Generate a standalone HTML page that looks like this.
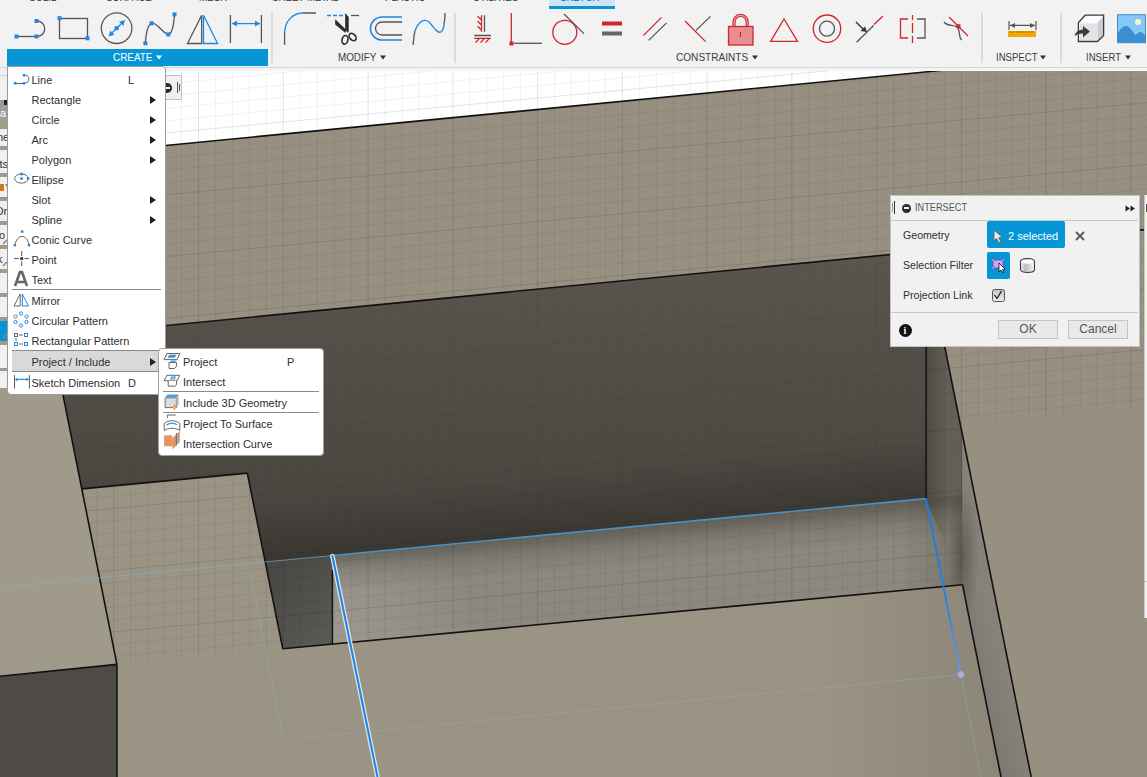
<!DOCTYPE html>
<html><head><meta charset="utf-8">
<style>
html,body{margin:0;padding:0;width:1147px;height:777px;overflow:hidden;background:#fff;font-family:"Liberation Sans",sans-serif;}
.abs{position:absolute;}
#tb{position:absolute;left:0;top:0;width:1147px;height:67px;background:#f2f2f2;border-bottom:1px solid #d6d6d6;}
.tab{position:absolute;top:-9px;font-size:11px;color:#333;white-space:nowrap;transform:scaleX(0.88);transform-origin:0 0;}
.glab{position:absolute;top:50.5px;font-size:11px;color:#3c3c3c;white-space:nowrap;transform-origin:0 0;}
.tri{display:inline-block;width:0;height:0;border-left:3px solid transparent;border-right:3px solid transparent;border-top:4px solid #333;vertical-align:middle;margin-left:3px;position:relative;top:-1px;}
.sep{position:absolute;top:13px;width:2px;height:50px;background:#dadada;}
#menu{position:absolute;left:7px;top:66px;width:157px;height:327px;background:#fff;border:1px solid #9a9a9a;border-radius:0 4px 4px 4px;box-sizing:content-box;}
.mi{position:absolute;left:23.5px;font-size:11px;color:#2e2e2e;white-space:nowrap;}
.sc{position:absolute;font-size:11px;color:#2e2e2e;}
.arr{position:absolute;left:142px;width:0;height:0;border-top:4.5px solid transparent;border-bottom:4.5px solid transparent;border-left:6px solid #222;}
.msep{position:absolute;left:4px;width:149px;height:1px;background:#8a8a8a;}
#sub{position:absolute;left:158px;top:348px;width:164px;height:106px;background:#fff;border:1px solid #a0a0a0;border-radius:4px;}
.si{position:absolute;left:24px;font-size:11px;color:#2e2e2e;white-space:nowrap;}
#dlg{position:absolute;left:890px;top:195px;width:250px;height:152px;background:#f1f1f1;border:1px solid #c4c4c4;box-sizing:border-box;}
.dl{position:absolute;left:12px;font-size:10.6px;color:#2e2e2e;white-space:nowrap;}
.btn{position:absolute;top:124px;width:58px;height:17px;background:#e9e9e9;border:1px solid #c4c4c4;font-size:12px;color:#555;text-align:center;line-height:17px;}
</style></head><body>
<svg class="abs" style="left:0;top:0" width="1147" height="777" viewBox="0 0 1147 777"><rect x="0" y="0" width="1147" height="777" fill="#ffffff"/><defs>
<linearGradient id="gD" x1="0" y1="0" x2="0" y2="1"><stop offset="0" stop-color="#5a564e"/><stop offset="1" stop-color="#423f3a"/></linearGradient>
<linearGradient id="gM" x1="0" y1="0" x2="0" y2="1"><stop offset="0" stop-color="#6e6b64"/><stop offset="0.35" stop-color="#858279"/><stop offset="1" stop-color="#8d8a80"/></linearGradient>
<linearGradient id="gN" x1="0" y1="0" x2="1" y2="1"><stop offset="0" stop-color="#42423f"/><stop offset="1" stop-color="#5c5b57"/></linearGradient>
<linearGradient id="aoD" gradientUnits="userSpaceOnUse" x1="630" y1="527" x2="624" y2="467"><stop offset="0" stop-color="#1e1c19" stop-opacity="0.32"/><stop offset="1" stop-color="#1e1c19" stop-opacity="0"/></linearGradient>
<linearGradient id="gS" x1="0" y1="0" x2="1" y2="0"><stop offset="0" stop-color="#6a6760"/><stop offset="0.6" stop-color="#8a867e"/><stop offset="1" stop-color="#8c887f"/></linearGradient>
</defs><polygon points="0.0,161.5 1147.0,50.5 1147.0,777.0 0.0,777.0" fill="#978f80"/><polygon points="51.4,336.7 926.0,251.0 926.0,498.6 332.4,555.5 332.4,644.7 282.8,648.8 247.3,473.1 81.8,488.9" fill="url(#gD)"/><polygon points="247.3,473.1 926.0,410.0 926.0,498.6 332.4,555.5 265.6,562.0" fill="url(#aoD)"/><polygon points="249.4,563.7 332.4,555.5 332.4,644.7 282.8,648.8" fill="url(#gN)"/><polygon points="332.4,644.1 332.4,555.5 926.0,498.6 926.0,251.0 925.5,251.0 962.5,435.2 962.5,584.7" fill="#8b887e"/><defs>
<linearGradient id="aoTop" gradientUnits="userSpaceOnUse" x1="630" y1="527" x2="633.5" y2="567"><stop offset="0" stop-color="#3a3630" stop-opacity="0.5"/><stop offset="0.5" stop-color="#3a3630" stop-opacity="0.15"/><stop offset="1" stop-color="#3a3630" stop-opacity="0"/></linearGradient>
<linearGradient id="aoL" gradientUnits="userSpaceOnUse" x1="333" y1="640" x2="450" y2="560"><stop offset="0" stop-color="#ffffff" stop-opacity="0.14"/><stop offset="1" stop-color="#ffffff" stop-opacity="0"/></linearGradient>
<linearGradient id="aoR" gradientUnits="userSpaceOnUse" x1="926" y1="0" x2="948" y2="0"><stop offset="0" stop-color="#3a3630" stop-opacity="0.5"/><stop offset="1" stop-color="#3a3630" stop-opacity="0"/></linearGradient>
<linearGradient id="aoR2" gradientUnits="userSpaceOnUse" x1="962" y1="0" x2="900" y2="0"><stop offset="0" stop-color="#3a3630" stop-opacity="0.25"/><stop offset="1" stop-color="#3a3630" stop-opacity="0"/></linearGradient>
</defs><polygon points="332.4,644.1 332.4,555.5 926.0,498.6 926.0,251.0 925.5,251.0 962.5,435.2 962.5,584.7" fill="url(#aoL)"/><polygon points="332.4,644.1 332.4,555.5 926.0,498.6 926.0,251.0 925.5,251.0 962.5,435.2 962.5,584.7" fill="url(#aoTop)"/><polygon points="926.0,251.0 925.5,251.0 962.5,435.2 962.5,584.7 926.0,498.6" fill="url(#aoR)"/><polygon points="900.0,500.0 962.5,495.0 962.5,584.7 900.0,590.6" fill="url(#aoR2)"/><polygon points="81.8,488.9 247.3,473.1 282.8,648.8 962.5,584.7 1001.0,777.0 116.9,777.0 116.9,664.4" fill="#9b9485"/><g><line x1="12.00" y1="68" x2="12.00" y2="777" stroke="#000" stroke-opacity="0.055" stroke-width="1"/><line x1="28.95" y1="68" x2="28.95" y2="777" stroke="#000" stroke-opacity="0.11" stroke-width="1"/><line x1="45.91" y1="68" x2="45.91" y2="777" stroke="#000" stroke-opacity="0.055" stroke-width="1"/><line x1="62.86" y1="68" x2="62.86" y2="777" stroke="#000" stroke-opacity="0.055" stroke-width="1"/><line x1="79.82" y1="68" x2="79.82" y2="777" stroke="#000" stroke-opacity="0.055" stroke-width="1"/><line x1="96.77" y1="68" x2="96.77" y2="777" stroke="#000" stroke-opacity="0.055" stroke-width="1"/><line x1="113.73" y1="68" x2="113.73" y2="777" stroke="#000" stroke-opacity="0.11" stroke-width="1"/><line x1="130.68" y1="68" x2="130.68" y2="777" stroke="#000" stroke-opacity="0.055" stroke-width="1"/><line x1="147.63" y1="68" x2="147.63" y2="777" stroke="#000" stroke-opacity="0.055" stroke-width="1"/><line x1="164.59" y1="68" x2="164.59" y2="777" stroke="#000" stroke-opacity="0.055" stroke-width="1"/><line x1="181.55" y1="68" x2="181.55" y2="777" stroke="#000" stroke-opacity="0.055" stroke-width="1"/><line x1="198.50" y1="68" x2="198.50" y2="777" stroke="#000" stroke-opacity="0.11" stroke-width="1"/><line x1="215.45" y1="68" x2="215.45" y2="777" stroke="#000" stroke-opacity="0.055" stroke-width="1"/><line x1="232.41" y1="68" x2="232.41" y2="777" stroke="#000" stroke-opacity="0.055" stroke-width="1"/><line x1="249.37" y1="68" x2="249.37" y2="777" stroke="#000" stroke-opacity="0.055" stroke-width="1"/><line x1="266.32" y1="68" x2="266.32" y2="777" stroke="#000" stroke-opacity="0.055" stroke-width="1"/><line x1="283.27" y1="68" x2="283.27" y2="777" stroke="#000" stroke-opacity="0.11" stroke-width="1"/><line x1="300.23" y1="68" x2="300.23" y2="777" stroke="#000" stroke-opacity="0.055" stroke-width="1"/><line x1="317.19" y1="68" x2="317.19" y2="777" stroke="#000" stroke-opacity="0.055" stroke-width="1"/><line x1="334.14" y1="68" x2="334.14" y2="777" stroke="#000" stroke-opacity="0.055" stroke-width="1"/><line x1="351.09" y1="68" x2="351.09" y2="777" stroke="#000" stroke-opacity="0.055" stroke-width="1"/><line x1="368.05" y1="68" x2="368.05" y2="777" stroke="#000" stroke-opacity="0.11" stroke-width="1"/><line x1="385.00" y1="68" x2="385.00" y2="777" stroke="#000" stroke-opacity="0.055" stroke-width="1"/><line x1="401.96" y1="68" x2="401.96" y2="777" stroke="#000" stroke-opacity="0.055" stroke-width="1"/><line x1="418.91" y1="68" x2="418.91" y2="777" stroke="#000" stroke-opacity="0.055" stroke-width="1"/><line x1="435.87" y1="68" x2="435.87" y2="777" stroke="#000" stroke-opacity="0.055" stroke-width="1"/><line x1="452.82" y1="68" x2="452.82" y2="777" stroke="#000" stroke-opacity="0.11" stroke-width="1"/><line x1="469.78" y1="68" x2="469.78" y2="777" stroke="#000" stroke-opacity="0.055" stroke-width="1"/><line x1="486.73" y1="68" x2="486.73" y2="777" stroke="#000" stroke-opacity="0.055" stroke-width="1"/><line x1="503.69" y1="68" x2="503.69" y2="777" stroke="#000" stroke-opacity="0.055" stroke-width="1"/><line x1="520.64" y1="68" x2="520.64" y2="777" stroke="#000" stroke-opacity="0.055" stroke-width="1"/><line x1="537.60" y1="68" x2="537.60" y2="777" stroke="#000" stroke-opacity="0.11" stroke-width="1"/><line x1="554.55" y1="68" x2="554.55" y2="777" stroke="#000" stroke-opacity="0.055" stroke-width="1"/><line x1="571.51" y1="68" x2="571.51" y2="777" stroke="#000" stroke-opacity="0.055" stroke-width="1"/><line x1="588.46" y1="68" x2="588.46" y2="777" stroke="#000" stroke-opacity="0.055" stroke-width="1"/><line x1="605.42" y1="68" x2="605.42" y2="777" stroke="#000" stroke-opacity="0.055" stroke-width="1"/><line x1="622.38" y1="68" x2="622.38" y2="777" stroke="#000" stroke-opacity="0.11" stroke-width="1"/><line x1="639.33" y1="68" x2="639.33" y2="777" stroke="#000" stroke-opacity="0.055" stroke-width="1"/><line x1="656.28" y1="68" x2="656.28" y2="777" stroke="#000" stroke-opacity="0.055" stroke-width="1"/><line x1="673.24" y1="68" x2="673.24" y2="777" stroke="#000" stroke-opacity="0.055" stroke-width="1"/><line x1="690.19" y1="68" x2="690.19" y2="777" stroke="#000" stroke-opacity="0.055" stroke-width="1"/><line x1="707.15" y1="68" x2="707.15" y2="777" stroke="#000" stroke-opacity="0.11" stroke-width="1"/><line x1="724.10" y1="68" x2="724.10" y2="777" stroke="#000" stroke-opacity="0.055" stroke-width="1"/><line x1="741.06" y1="68" x2="741.06" y2="777" stroke="#000" stroke-opacity="0.055" stroke-width="1"/><line x1="758.01" y1="68" x2="758.01" y2="777" stroke="#000" stroke-opacity="0.055" stroke-width="1"/><line x1="774.97" y1="68" x2="774.97" y2="777" stroke="#000" stroke-opacity="0.055" stroke-width="1"/><line x1="791.92" y1="68" x2="791.92" y2="777" stroke="#000" stroke-opacity="0.11" stroke-width="1"/><line x1="808.88" y1="68" x2="808.88" y2="777" stroke="#000" stroke-opacity="0.055" stroke-width="1"/><line x1="825.83" y1="68" x2="825.83" y2="777" stroke="#000" stroke-opacity="0.055" stroke-width="1"/><line x1="842.79" y1="68" x2="842.79" y2="777" stroke="#000" stroke-opacity="0.055" stroke-width="1"/><line x1="859.74" y1="68" x2="859.74" y2="777" stroke="#000" stroke-opacity="0.055" stroke-width="1"/><line x1="876.70" y1="68" x2="876.70" y2="777" stroke="#000" stroke-opacity="0.11" stroke-width="1"/><line x1="893.65" y1="68" x2="893.65" y2="777" stroke="#000" stroke-opacity="0.055" stroke-width="1"/><line x1="910.61" y1="68" x2="910.61" y2="777" stroke="#000" stroke-opacity="0.055" stroke-width="1"/><line x1="927.56" y1="68" x2="927.56" y2="777" stroke="#000" stroke-opacity="0.055" stroke-width="1"/><line x1="944.52" y1="68" x2="944.52" y2="777" stroke="#000" stroke-opacity="0.055" stroke-width="1"/><line x1="961.47" y1="68" x2="961.47" y2="777" stroke="#000" stroke-opacity="0.11" stroke-width="1"/><line x1="978.43" y1="68" x2="978.43" y2="777" stroke="#000" stroke-opacity="0.055" stroke-width="1"/><line x1="995.38" y1="68" x2="995.38" y2="777" stroke="#000" stroke-opacity="0.055" stroke-width="1"/><line x1="1012.34" y1="68" x2="1012.34" y2="777" stroke="#000" stroke-opacity="0.055" stroke-width="1"/><line x1="1029.30" y1="68" x2="1029.30" y2="777" stroke="#000" stroke-opacity="0.055" stroke-width="1"/><line x1="1046.25" y1="68" x2="1046.25" y2="777" stroke="#000" stroke-opacity="0.11" stroke-width="1"/><line x1="1063.20" y1="68" x2="1063.20" y2="777" stroke="#000" stroke-opacity="0.055" stroke-width="1"/><line x1="1080.16" y1="68" x2="1080.16" y2="777" stroke="#000" stroke-opacity="0.055" stroke-width="1"/><line x1="1097.11" y1="68" x2="1097.11" y2="777" stroke="#000" stroke-opacity="0.055" stroke-width="1"/><line x1="1114.07" y1="68" x2="1114.07" y2="777" stroke="#000" stroke-opacity="0.055" stroke-width="1"/><line x1="1131.02" y1="68" x2="1131.02" y2="777" stroke="#000" stroke-opacity="0.11" stroke-width="1"/><line x1="1147.98" y1="68" x2="1147.98" y2="777" stroke="#000" stroke-opacity="0.055" stroke-width="1"/><line x1="0" y1="62.20" x2="1147" y2="-45.62" stroke="#000" stroke-opacity="0.055" stroke-width="1"/><line x1="0" y1="74.55" x2="1147" y2="-33.27" stroke="#000" stroke-opacity="0.055" stroke-width="1"/><line x1="0" y1="86.90" x2="1147" y2="-20.92" stroke="#000" stroke-opacity="0.11" stroke-width="1"/><line x1="0" y1="99.25" x2="1147" y2="-8.57" stroke="#000" stroke-opacity="0.055" stroke-width="1"/><line x1="0" y1="111.60" x2="1147" y2="3.78" stroke="#000" stroke-opacity="0.055" stroke-width="1"/><line x1="0" y1="123.95" x2="1147" y2="16.13" stroke="#000" stroke-opacity="0.055" stroke-width="1"/><line x1="0" y1="136.30" x2="1147" y2="28.48" stroke="#000" stroke-opacity="0.055" stroke-width="1"/><line x1="0" y1="148.65" x2="1147" y2="40.83" stroke="#000" stroke-opacity="0.11" stroke-width="1"/><line x1="0" y1="161.00" x2="1147" y2="53.18" stroke="#000" stroke-opacity="0.055" stroke-width="1"/><line x1="0" y1="173.35" x2="1147" y2="65.53" stroke="#000" stroke-opacity="0.055" stroke-width="1"/><line x1="0" y1="185.70" x2="1147" y2="77.88" stroke="#000" stroke-opacity="0.055" stroke-width="1"/><line x1="0" y1="198.05" x2="1147" y2="90.23" stroke="#000" stroke-opacity="0.055" stroke-width="1"/><line x1="0" y1="210.40" x2="1147" y2="102.58" stroke="#000" stroke-opacity="0.11" stroke-width="1"/><line x1="0" y1="222.75" x2="1147" y2="114.93" stroke="#000" stroke-opacity="0.055" stroke-width="1"/><line x1="0" y1="235.10" x2="1147" y2="127.28" stroke="#000" stroke-opacity="0.055" stroke-width="1"/><line x1="0" y1="247.45" x2="1147" y2="139.63" stroke="#000" stroke-opacity="0.055" stroke-width="1"/><line x1="0" y1="259.80" x2="1147" y2="151.98" stroke="#000" stroke-opacity="0.055" stroke-width="1"/><line x1="0" y1="272.15" x2="1147" y2="164.33" stroke="#000" stroke-opacity="0.11" stroke-width="1"/><line x1="0" y1="284.50" x2="1147" y2="176.68" stroke="#000" stroke-opacity="0.055" stroke-width="1"/><line x1="0" y1="296.85" x2="1147" y2="189.03" stroke="#000" stroke-opacity="0.055" stroke-width="1"/><line x1="0" y1="309.20" x2="1147" y2="201.38" stroke="#000" stroke-opacity="0.055" stroke-width="1"/><line x1="0" y1="321.55" x2="1147" y2="213.73" stroke="#000" stroke-opacity="0.055" stroke-width="1"/><line x1="0" y1="333.90" x2="1147" y2="226.08" stroke="#000" stroke-opacity="0.11" stroke-width="1"/><line x1="0" y1="346.25" x2="1147" y2="238.43" stroke="#000" stroke-opacity="0.055" stroke-width="1"/><line x1="0" y1="358.60" x2="1147" y2="250.78" stroke="#000" stroke-opacity="0.055" stroke-width="1"/><line x1="0" y1="370.95" x2="1147" y2="263.13" stroke="#000" stroke-opacity="0.055" stroke-width="1"/><line x1="0" y1="383.30" x2="1147" y2="275.48" stroke="#000" stroke-opacity="0.055" stroke-width="1"/><line x1="0" y1="395.65" x2="1147" y2="287.83" stroke="#000" stroke-opacity="0.11" stroke-width="1"/><line x1="0" y1="408.00" x2="1147" y2="300.18" stroke="#000" stroke-opacity="0.055" stroke-width="1"/><line x1="0" y1="420.35" x2="1147" y2="312.53" stroke="#000" stroke-opacity="0.055" stroke-width="1"/><line x1="0" y1="432.70" x2="1147" y2="324.88" stroke="#000" stroke-opacity="0.055" stroke-width="1"/><line x1="0" y1="445.05" x2="1147" y2="337.23" stroke="#000" stroke-opacity="0.055" stroke-width="1"/><line x1="0" y1="457.40" x2="1147" y2="349.58" stroke="#000" stroke-opacity="0.11" stroke-width="1"/><line x1="0" y1="469.75" x2="1147" y2="361.93" stroke="#000" stroke-opacity="0.055" stroke-width="1"/><line x1="0" y1="482.10" x2="1147" y2="374.28" stroke="#000" stroke-opacity="0.055" stroke-width="1"/><line x1="0" y1="494.45" x2="1147" y2="386.63" stroke="#000" stroke-opacity="0.055" stroke-width="1"/><line x1="0" y1="506.80" x2="1147" y2="398.98" stroke="#000" stroke-opacity="0.055" stroke-width="1"/><line x1="0" y1="519.15" x2="1147" y2="411.33" stroke="#000" stroke-opacity="0.11" stroke-width="1"/><line x1="0" y1="531.50" x2="1147" y2="423.68" stroke="#000" stroke-opacity="0.055" stroke-width="1"/><line x1="0" y1="543.85" x2="1147" y2="436.03" stroke="#000" stroke-opacity="0.055" stroke-width="1"/><line x1="0" y1="556.20" x2="1147" y2="448.38" stroke="#000" stroke-opacity="0.055" stroke-width="1"/><line x1="0" y1="568.55" x2="1147" y2="460.73" stroke="#000" stroke-opacity="0.055" stroke-width="1"/><line x1="0" y1="580.90" x2="1147" y2="473.08" stroke="#000" stroke-opacity="0.11" stroke-width="1"/><line x1="0" y1="593.25" x2="1147" y2="485.43" stroke="#000" stroke-opacity="0.055" stroke-width="1"/><line x1="0" y1="605.60" x2="1147" y2="497.78" stroke="#000" stroke-opacity="0.055" stroke-width="1"/><line x1="0" y1="617.95" x2="1147" y2="510.13" stroke="#000" stroke-opacity="0.055" stroke-width="1"/><line x1="0" y1="630.30" x2="1147" y2="522.48" stroke="#000" stroke-opacity="0.055" stroke-width="1"/><line x1="0" y1="642.65" x2="1147" y2="534.83" stroke="#000" stroke-opacity="0.11" stroke-width="1"/><line x1="0" y1="655.00" x2="1147" y2="547.18" stroke="#000" stroke-opacity="0.055" stroke-width="1"/><line x1="0" y1="667.35" x2="1147" y2="559.53" stroke="#000" stroke-opacity="0.055" stroke-width="1"/><line x1="0" y1="679.70" x2="1147" y2="571.88" stroke="#000" stroke-opacity="0.055" stroke-width="1"/><line x1="0" y1="692.05" x2="1147" y2="584.23" stroke="#000" stroke-opacity="0.055" stroke-width="1"/><line x1="0" y1="704.40" x2="1147" y2="596.58" stroke="#000" stroke-opacity="0.11" stroke-width="1"/><line x1="0" y1="716.75" x2="1147" y2="608.93" stroke="#000" stroke-opacity="0.055" stroke-width="1"/><line x1="0" y1="729.10" x2="1147" y2="621.28" stroke="#000" stroke-opacity="0.055" stroke-width="1"/><line x1="0" y1="741.45" x2="1147" y2="633.63" stroke="#000" stroke-opacity="0.055" stroke-width="1"/><line x1="0" y1="753.80" x2="1147" y2="645.98" stroke="#000" stroke-opacity="0.055" stroke-width="1"/><line x1="0" y1="766.15" x2="1147" y2="658.33" stroke="#000" stroke-opacity="0.11" stroke-width="1"/><line x1="0" y1="778.50" x2="1147" y2="670.68" stroke="#000" stroke-opacity="0.055" stroke-width="1"/><line x1="0" y1="790.85" x2="1147" y2="683.03" stroke="#000" stroke-opacity="0.055" stroke-width="1"/><line x1="0" y1="803.20" x2="1147" y2="695.38" stroke="#000" stroke-opacity="0.055" stroke-width="1"/><line x1="0" y1="815.55" x2="1147" y2="707.73" stroke="#000" stroke-opacity="0.055" stroke-width="1"/><line x1="0" y1="827.90" x2="1147" y2="720.08" stroke="#000" stroke-opacity="0.11" stroke-width="1"/><line x1="0" y1="840.25" x2="1147" y2="732.43" stroke="#000" stroke-opacity="0.055" stroke-width="1"/><line x1="0" y1="852.60" x2="1147" y2="744.78" stroke="#000" stroke-opacity="0.055" stroke-width="1"/><line x1="0" y1="864.95" x2="1147" y2="757.13" stroke="#000" stroke-opacity="0.055" stroke-width="1"/><line x1="0" y1="877.30" x2="1147" y2="769.48" stroke="#000" stroke-opacity="0.055" stroke-width="1"/><line x1="0" y1="889.65" x2="1147" y2="781.83" stroke="#000" stroke-opacity="0.11" stroke-width="1"/></g><polygon points="51.4,336.7 926.0,251.0 926.0,498.6 332.4,555.5 265.6,562.0 247.3,473.1 81.8,488.9" fill="url(#gD)" fill-opacity="0.4"/><polygon points="247.3,473.1 926.0,410.0 926.0,498.6 332.4,555.5 265.6,562.0" fill="url(#aoD)" fill-opacity="0.4"/><polygon points="0.0,341.8 51.4,336.7 116.9,664.4 0.0,676.3" fill="#a09a8b"/><polygon points="0.0,676.3 116.9,664.4 116.9,777.0 0.0,777.0" fill="#4e4b46"/><polygon points="116.9,664.4 962.5,584.7 1001.0,777.0 116.9,777.0" fill="#9b9485"/><defs><linearGradient id="aoFB" gradientUnits="userSpaceOnUse" x1="985" y1="0" x2="820" y2="0"><stop offset="0" stop-color="#2e2b27" stop-opacity="0.13"/><stop offset="1" stop-color="#2e2b27" stop-opacity="0"/></linearGradient></defs><polygon points="700.0,609.5 962.5,584.7 1001.0,777.0 700.0,777.0" fill="url(#aoFB)"/><polygon points="962.5,435.2 1031.2,777.0 1001.0,777.0 962.5,584.7" fill="#86827a"/><defs><clipPath id="cW"><polygon points="926.0,251.0 1031.2,777.0 1001.0,777.0 962.5,584.7 900.0,590.6 900.0,500.9 926.0,498.6"/></clipPath>
<radialGradient id="shW"><stop offset="0" stop-color="#2e2b27" stop-opacity="0.42"/><stop offset="0.6" stop-color="#2e2b27" stop-opacity="0.15"/><stop offset="1" stop-color="#2e2b27" stop-opacity="0"/></radialGradient>
<linearGradient id="wallLow" x1="0" y1="0" x2="0" y2="1"><stop offset="0" stop-color="#2e2b27" stop-opacity="0.12"/><stop offset="1" stop-color="#2e2b27" stop-opacity="0"/></linearGradient></defs><g clip-path="url(#cW)"><ellipse cx="963" cy="555" rx="16" ry="75" fill="url(#shW)"/></g><defs><linearGradient id="aoWL" gradientUnits="userSpaceOnUse" x1="975" y1="700" x2="1010" y2="690"><stop offset="0" stop-color="#2e2b27" stop-opacity="0.12"/><stop offset="1" stop-color="#2e2b27" stop-opacity="0"/></linearGradient></defs><polygon points="962.5,584.7 992.6,584.7 1031.2,777.0 1001.0,777.0" fill="url(#aoWL)"/><polygon points="960.3,424.5 1147.0,408.6 1147.0,777.0 1031.2,777.0" fill="#978f80"/><line x1="0.0" y1="161.5" x2="1147.0" y2="50.5" stroke="#111" stroke-width="1.6" /><line x1="0.0" y1="341.8" x2="1147.0" y2="229.4" stroke="#111" stroke-width="1.6" /><line x1="51.4" y1="336.9" x2="116.9" y2="664.4" stroke="#111" stroke-width="1.6" /><line x1="0.0" y1="676.3" x2="116.9" y2="664.4" stroke="#111" stroke-width="1.6" /><line x1="116.9" y1="664.4" x2="116.9" y2="777.0" stroke="#111" stroke-width="1.6" /><line x1="81.8" y1="488.9" x2="247.3" y2="473.1" stroke="#111" stroke-width="1.6" /><line x1="247.3" y1="473.1" x2="282.8" y2="648.8" stroke="#111" stroke-width="1.6" /><line x1="282.8" y1="648.8" x2="962.5" y2="584.7" stroke="#111" stroke-width="1.6" /><line x1="332.4" y1="570.0" x2="332.4" y2="644.7" stroke="#111" stroke-width="1.4" /><line x1="926.0" y1="251.0" x2="926.0" y2="498.6" stroke="#111" stroke-width="1.4" /><line x1="962.5" y1="584.7" x2="1001.0" y2="777.0" stroke="#111" stroke-width="1.6" /><line x1="925.5" y1="251.0" x2="1031.2" y2="777.0" stroke="#111" stroke-width="1.6" /><line x1="0.0" y1="587.3" x2="332.4" y2="555.5" stroke="#7fb0cc" stroke-width="1" stroke-opacity="0.65"/><line x1="248.2" y1="563.8" x2="283.5" y2="739.7" stroke="#7fb0cc" stroke-width="1" stroke-opacity="0.55"/><line x1="283.5" y1="739.7" x2="961.0" y2="674.6" stroke="#7fb0cc" stroke-width="1" stroke-opacity="0.5"/><line x1="961.0" y1="674.6" x2="981.0" y2="777.0" stroke="#7fb0cc" stroke-width="1" stroke-opacity="0.5"/><line x1="332.4" y1="555.5" x2="926.0" y2="498.6" stroke="#4b90c2" stroke-width="1.6" /><line x1="332.4" y1="556.0" x2="377.5" y2="777.0" stroke="#e4e2dc" stroke-width="4.6" stroke-linecap="round"/><line x1="332.4" y1="556.0" x2="377.5" y2="777.0" stroke="#1a84f2" stroke-width="2.0" stroke-linecap="round"/><defs><linearGradient id="gB" gradientUnits="userSpaceOnUse" x1="926" y1="498" x2="961" y2="675"><stop offset="0" stop-color="#1a78ea"/><stop offset="0.55" stop-color="#1f80ea"/><stop offset="1" stop-color="#5a9ce0"/></linearGradient></defs><line x1="926.0" y1="498.6" x2="961.0" y2="674.6" stroke="url(#gB)" stroke-width="1.8" /><circle cx="961" cy="674.6" r="3.3" fill="#aeb0e0" fill-opacity="0.9"/></svg>

<!-- toolbar -->
<div class="abs" style="left:0;top:67px;width:1147px;height:3.5px;background:#f4f4f4"></div>
<div id="tb">
  <div class="tab" style="left:29px">SOLID</div>
  <div class="tab" style="left:106px">SURFACE</div>
  <div class="tab" style="left:199px">MESH</div>
  <div class="tab" style="left:272px">SHEET METAL</div>
  <div class="tab" style="left:385px">PLASTIC</div>
  <div class="tab" style="left:473px">UTILITIES</div>
  <div class="abs" style="left:549px;top:0;width:66px;height:6px;background:#cfe5f5"></div>
  <div class="abs" style="left:549px;top:6px;width:66px;height:3px;background:#0696d7"></div>
  <div class="tab" style="left:560px;color:#0b6aa8">SKETCH</div>

  <div class="abs" style="left:7px;top:49px;width:261px;height:17px;background:#0696d7"></div>
  <div class="glab" style="left:112.7px;color:#fff;transform:scaleX(0.9)">CREATE</div>
  <svg class="abs" style="left:155.6px;top:55px" width="7" height="5"><path d="M0 0.5 H6 L3 4.5 Z" fill="#fff"/></svg>
  <div class="glab" style="left:338.1px;color:#3c3c3c;transform:scaleX(0.895)">MODIFY</div>
  <svg class="abs" style="left:380.0px;top:55px" width="7" height="5"><path d="M0 0.5 H6 L3 4.5 Z" fill="#333"/></svg>
  <div class="glab" style="left:675.8px;color:#3c3c3c;transform:scaleX(0.916)">CONSTRAINTS</div>
  <svg class="abs" style="left:752.0px;top:55px" width="7" height="5"><path d="M0 0.5 H6 L3 4.5 Z" fill="#333"/></svg>
  <div class="glab" style="left:995.7px;color:#3c3c3c;transform:scaleX(0.87)">INSPECT</div>
  <svg class="abs" style="left:1040.3px;top:55px" width="7" height="5"><path d="M0 0.5 H6 L3 4.5 Z" fill="#333"/></svg>
  <div class="glab" style="left:1086.4px;color:#3c3c3c;transform:scaleX(0.873)">INSERT</div>
  <svg class="abs" style="left:1125.0px;top:55px" width="7" height="5"><path d="M0 0.5 H6 L3 4.5 Z" fill="#333"/></svg>
  <div class="sep" style="left:271px"></div>
  <div class="sep" style="left:454px"></div>
  <div class="sep" style="left:981px"></div>
  <div class="sep" style="left:1060px"></div>

  <svg class="abs" style="left:0;top:0" width="1147" height="67" viewBox="0 0 1147 67">
    <g fill="none" stroke="#555" stroke-width="1.3">
      <!-- line -->
      <path d="M17 36.5 H36.5"/>
      <path d="M37 21 A7.7 7.7 0 0 1 37 36.5" />
      <!-- rect -->
      <rect x="59.5" y="18.5" width="28" height="20"/>
      <!-- circle -->
      <circle cx="116.6" cy="28.2" r="15.3"/>
      <!-- spline -->
      <path d="M145.4 43 C146 33 148 25 151.6 23.3 C156 21 163 34 168.3 34.4 C173 34 174 22 174.5 14.4"/>
      <!-- mirror gray -->
      <path d="M187.5 43.5 L201.7 15.2 V43.5 Z"/>
      <!-- dim -->
      <path d="M230.4 15 V43 M261.4 15 V43"/>
      <!-- fillet -->
      <path d="M284.6 33 V45 M303 13 H316"/>
      <!-- trim gray line -->
      <path d="M351 15.5 H359"/>
      <!-- offset inner -->
      <path d="M402 22 H382 A6.5 6.5 0 0 0 382 35 H402"/>
      <!-- spline modify -->
      <path d="M413 45 C414 38 414 34 415 31 M444 24 C445 20 445 16 445 13"/>
    </g>
    <g fill="#1e88e5">
      <rect x="14.5" y="34.5" width="4" height="4"/><rect x="34.5" y="34.5" width="4" height="4"/><rect x="34.5" y="19" width="4" height="4"/>
      <rect x="57.5" y="16.2" width="4" height="4"/><rect x="85.5" y="36.3" width="4" height="4"/>
      <rect x="114.6" y="26.2" width="4" height="4"/>
      <rect x="143.4" y="41.3" width="4" height="4"/><rect x="149.6" y="21.3" width="4" height="4"/><rect x="166.3" y="32.4" width="4" height="4"/><rect x="172.5" y="12.4" width="4" height="4"/>
    </g>
    <g fill="none" stroke="#1e88e5" stroke-width="1.3">
      <path d="M109 36 L124.5 20.5"/>
      <path d="M203.5 15.2 V43.5 H217.6 Z"/>
      <path d="M232 23.6 H260"/>
      <path d="M284.6 33 C284.6 22 292 13 303 13"/>
      <path d="M327 15.5 H343.5" stroke-dasharray="4 2"/>
      <path d="M402 17 H382 A11.5 11.5 0 0 0 382 40 H402" stroke-width="1.6"/>
      <path d="M415 31 C418 22 424 18 429 22 C434 27 437 34 441 32 C443 30 444 27 444 24"/>
    </g>
    <g fill="#1e88e5">
      <path d="M124.5 20.5 l-1 5.5 l-4.5 -4.5 z"/><path d="M109 36 l1 -5.5 l4.5 4.5 z"/>
      <path d="M232 23.6 l5 -3 v6 z"/><path d="M260 23.6 l-5 -3 v6 z"/>
    </g>
    <!-- scissors -->
    <g fill="#2a2a2a">
      <path d="M335.2 19.2 L345.8 29.5 L345.5 33 L335.2 24.4 Z"/>
      <path d="M345.2 13.1 L348.7 16.9 L348.7 32.5 L345.2 32.5 Z"/>
    </g>
    <circle cx="346.5" cy="32.3" r="1.1" fill="#f2f2f2"/>
    <g fill="none" stroke="#2a2a2a" stroke-width="1.6">
      <ellipse cx="345" cy="39.8" rx="2.9" ry="4.4" transform="rotate(12 345 39.8)"/>
      <ellipse cx="352.6" cy="37" rx="2.9" ry="4.2" transform="rotate(-40 352.6 37)"/>
    </g>
    <!-- constraints -->
    <g fill="none" stroke="#d0262c" stroke-width="1.3">
      <path d="M481.5 15.2 V31.7 M477.5 16.2 L481.5 20 M477.5 21.2 L481.5 25 M477.5 26.2 L481.5 30 M474.2 38.4 H490.9 M479.2 38.6 L475.6 42.5 M484.2 38.6 L480.6 42.5 M489.2 38.6 L485.6 42.5"/>
      <path d="M511.3 13 V43"/>
      <circle cx="564.8" cy="32.3" r="12"/>
      <path d="M643.3 35.6 L661.5 17.4"/>
      <path d="M685 21 L705.6 41.6"/>
      <path d="M770.6 41.4 L784 19 L797.5 41.4 Z"/>
      <circle cx="827" cy="28.7" r="13.7"/>
      <path d="M874 24.5 L883 16"/>
      <path d="M908 19 H900.5 V38 H908 M912.5 15 V20 M912.5 23 V33 M912.5 36 V43"/>
      <path d="M949 17 L968 36"/>
    </g>
    <g fill="none" stroke="#555" stroke-width="1.3">
      <path d="M484.5 15.2 V31.7 M474.2 35.5 H490.9"/>
      <path d="M514 43.3 H542"/>
      <path d="M564 14 L584 33.6"/>
      <path d="M648.6 40.4 L666.6 22.9"/>
      <path d="M696 30.4 L710.5 16.4"/>
      <circle cx="827" cy="28.7" r="7.5"/>
      <path d="M856.6 42.3 L873.6 25.5"/>
      <path d="M917 19 H925 V38 H917"/>
      <path d="M944 22 C948 27 953 24 957 27 C961 31 958 38 962 40"/>
    </g>
    <rect x="602" y="21.5" width="20" height="4" fill="#d0262c"/>
    <rect x="602" y="31.5" width="20" height="4" fill="#666"/>
    <rect x="509.5" y="41.5" width="4" height="4" fill="#d0262c"/>
    <rect x="956.5" y="24.3" width="4" height="4" fill="#d0262c"/>
    <path d="M856 22 L864 30" stroke="#333" stroke-width="1.5"/><path d="M867 32 l-6.5 -1 l4.5 -4.5 z" fill="#333"/>
    <!-- lock -->
    <path d="M734 27 V22 A6.6 6.6 0 0 1 747.2 22 V27" fill="none" stroke="#d0262c" stroke-width="3.2"/>
    <path d="M734 27 V22 A6.6 6.6 0 0 1 747.2 22 V27" fill="none" stroke="#eaa2a5" stroke-width="1.1"/>
    <rect x="728.5" y="26.5" width="24.5" height="18.5" fill="#e58d90" stroke="#d0262c" stroke-width="1.3"/>
    <path d="M740.5 32 V37" stroke="#b01c22" stroke-width="1"/>
    <!-- inspect -->
    <path d="M1009 21 V30 M1036 21 V30 M1010 25.4 H1035" stroke="#555" stroke-width="1.2"/>
    <path d="M1010 25.4 l5 -2.5 v5 z M1035 25.4 l-5 -2.5 v5 z" fill="#555"/>
    <rect x="1008" y="31" width="28" height="6" fill="#f5a800"/>
    <path d="M1011 31 v2 M1014 31 v2 M1017 31 v2 M1020 31 v2 M1023 31 v2 M1026 31 v2 M1029 31 v2 M1032 31 v2" stroke="#7a5a00" stroke-width="0.8"/>
    <!-- insert cube -->
    <path d="M1078.4 22.8 L1085.1 15.2 H1103.6 V35.5 L1097.5 41.5 H1078.4 Z" fill="#fbfbfb"/>
    <path d="M1080 23.5 H1097 V40.5 H1080 Z" fill="#e2e3e7"/>
    <path d="M1097.5 23 L1103 17 V35 L1097.5 40.8 Z" fill="#c9cbd2"/>
    <path d="M1078.4 22.8 L1085.1 15.2 H1103.6 V35.5 L1097.5 41.5 H1078.4 Z" fill="none" stroke="#3a3a3c" stroke-width="1.3"/>
    <path d="M1074.5 36 C1076 31.5 1079 29.8 1083 29.6 V26 L1090 31.5 L1083 37.5 V33.5 C1079.5 33.5 1077 34.3 1074.5 36 Z" fill="#3a3c40"/>
    <!-- image -->
    <rect x="1117.5" y="14.7" width="28" height="28" fill="#86c8f8" stroke="#3d8ed0" stroke-width="1"/>
    <path d="M1118 33 C1121 27 1125 25 1128 26.5 C1131 28 1133 33 1135.5 35 C1138 33 1140 31 1142 32.5 C1144 33.5 1145 35 1145 36 V42.5 H1118 Z" fill="#3d8ed0"/>
    <circle cx="1138" cy="22" r="3" fill="#fbf8c8"/>
  </svg>
</div>

<!-- left browser panel strip -->
<div class="abs" style="left:0;top:0;width:8px;height:394px;overflow:hidden">
  <div class="abs" style="left:0;top:68px;width:8px;height:31.6px;background:#f0f0f0"></div>
  <div class="abs" style="left:0;top:99.6px;width:8px;height:5.2px;background:#a29a88"></div>
  <div class="abs" style="left:0;top:104.8px;width:8px;height:17.4px;background:#9c9c9c"></div>
  <div class="abs" style="left:0;top:122.2px;width:8px;height:7.0px;background:#a29a88"></div>
  <div class="abs" style="left:0;top:129.2px;width:8px;height:16.8px;background:#f0f0f0"></div>
  <div class="abs" style="left:0;top:146px;width:8px;height:4.0px;background:#a29a88"></div>
  <div class="abs" style="left:0;top:150px;width:8px;height:22.6px;background:#f0f0f0"></div>
  <div class="abs" style="left:0;top:172.6px;width:8px;height:4.6px;background:#a29a88"></div>
  <div class="abs" style="left:0;top:177.2px;width:8px;height:20.3px;background:#f0f0f0"></div>
  <div class="abs" style="left:0;top:197.5px;width:8px;height:3.5px;background:#a29a88"></div>
  <div class="abs" style="left:0;top:201px;width:8px;height:20.3px;background:#f0f0f0"></div>
  <div class="abs" style="left:0;top:221.3px;width:8px;height:4.0px;background:#a29a88"></div>
  <div class="abs" style="left:0;top:225.3px;width:8px;height:19.5px;background:#f0f0f0"></div>
  <div class="abs" style="left:0;top:244.8px;width:8px;height:4.1px;background:#a29a88"></div>
  <div class="abs" style="left:0;top:248.9px;width:8px;height:19.7px;background:#f0f0f0"></div>
  <div class="abs" style="left:0;top:268.6px;width:8px;height:4.1px;background:#a29a88"></div>
  <div class="abs" style="left:0;top:272.7px;width:8px;height:20.3px;background:#f0f0f0"></div>
  <div class="abs" style="left:0;top:293px;width:8px;height:4.0px;background:#a29a88"></div>
  <div class="abs" style="left:0;top:297px;width:8px;height:20.3px;background:#f0f0f0"></div>
  <div class="abs" style="left:0;top:317.3px;width:8px;height:3.5px;background:#a29a88"></div>
  <div class="abs" style="left:0;top:320.8px;width:8px;height:20.2px;background:#0696d7"></div>
  <div class="abs" style="left:0;top:341px;width:8px;height:3.5px;background:#a29a88"></div>
  <div class="abs" style="left:0;top:344.5px;width:8px;height:23.2px;background:#f0f0f0"></div>
  <div class="abs" style="left:0;top:367.7px;width:8px;height:2.9px;background:#a29a88"></div>
  <div class="abs" style="left:0;top:370.6px;width:8px;height:17.4px;background:#f0f0f0"></div>
  <div class="abs" style="left:0;top:75px;width:8px;height:1px;background:#d8d8d8"></div>
  <div class="abs" style="left:4px;top:99.6px;width:3px;height:5px;background:#222"></div>
  <div class="abs" style="left:0;top:106px;font-size:11px;color:#fff;line-height:14px">a</div>
  <div class="abs" style="left:-3px;top:130px;font-size:11px;color:#333;line-height:14px">ne</div>
  <div class="abs" style="left:-3px;top:157px;font-size:11px;color:#333;line-height:14px">its</div>
  <div class="abs" style="left:0;top:184px;width:4px;height:7px;background:#d07a20"></div>
  <div class="abs" style="left:5px;top:181px;font-size:11px;color:#555;line-height:14px">Y</div>
  <div class="abs" style="left:-5px;top:204px;font-size:11px;color:#333;line-height:14px">Or</div>
  <div class="abs" style="left:-1px;top:228px;font-size:11px;color:#333;line-height:14px">o</div>
  <div class="abs" style="left:-3px;top:252px;font-size:11px;color:#333;line-height:14px">k</div>
  <svg class="abs" style="left:0;top:0" width="8" height="394"><path d="M3 244 L7 240 M3 266 L7 262 M3 338 L7 334" stroke="#7a8aa8" stroke-width="1.5"/></svg>
</div>

<!-- small browser header behind menu -->
<div class="abs" style="left:160px;top:75px;width:22px;height:25px;background:#f0f0f0;border:1px solid #c0c0c0;box-sizing:border-box"></div>
<div class="abs" style="left:162px;top:83px;width:9.5px;height:9.5px;border-radius:50%;background:#2a2a2a"></div>
<div class="abs" style="left:164px;top:87px;width:5.5px;height:1.5px;background:#f0f0f0"></div>
<div class="abs" style="left:177px;top:82px;width:1px;height:11px;background:#555"></div>
<div class="abs" style="left:179px;top:84px;width:1px;height:7px;background:#555"></div>

<!-- CREATE menu -->
<div id="menu">
  <div class="abs" style="left:4px;top:283px;width:146px;height:21px;background:#d9d9d9"></div>
  <div class="mi" style="top:7px">Line</div><div class="sc" style="left:120px;top:7px">L</div>
  <div class="mi" style="top:27px">Rectangle</div><div class="arr" style="top:29px"></div>
  <div class="mi" style="top:47px">Circle</div><div class="arr" style="top:49px"></div>
  <div class="mi" style="top:67px">Arc</div><div class="arr" style="top:69px"></div>
  <div class="mi" style="top:87px">Polygon</div><div class="arr" style="top:89px"></div>
  <div class="mi" style="top:107px">Ellipse</div>
  <div class="mi" style="top:127px">Slot</div><div class="arr" style="top:129px"></div>
  <div class="mi" style="top:147px">Spline</div><div class="arr" style="top:149px"></div>
  <div class="mi" style="top:167px">Conic Curve</div>
  <div class="mi" style="top:187px">Point</div>
  <div class="mi" style="top:207px">Text</div>
  <div class="msep" style="top:222px"></div>
  <div class="mi" style="top:228px">Mirror</div>
  <div class="mi" style="top:248px">Circular Pattern</div>
  <div class="mi" style="top:268px">Rectangular Pattern</div>
  <div class="msep" style="top:283px"></div>
  <div class="msep" style="top:304px"></div>
  <div class="mi" style="top:289px">Project / Include</div><div class="arr" style="top:291px"></div>
  <div class="mi" style="top:310px">Sketch Dimension</div><div class="sc" style="left:120px;top:310px">D</div>
  <svg class="abs" style="left:0;top:0" width="40" height="327" viewBox="7 67 40 327">
    <!-- line icon -->
    <path d="M15 83.5 H22 M24.5 75.3 C29 75.3 29 82.8 24.5 82.8" fill="none" stroke="#666" stroke-width="1"/>
    <g fill="#1e88e5"><rect x="12.8" y="82" width="2.5" height="2.5"/><rect x="21.8" y="82" width="2.5" height="2.5"/><rect x="21.8" y="74" width="2.5" height="2.5"/></g>
    <!-- ellipse -->
    <ellipse cx="20.4" cy="178.5" rx="6.7" ry="4.6" fill="none" stroke="#666" stroke-width="1"/>
    <g fill="#1e88e5"><rect x="19.2" y="172.8" width="2.5" height="2.5"/><rect x="19.2" y="177.3" width="2.5" height="2.5"/><rect x="25.8" y="177.3" width="2.5" height="2.5"/></g>
    <!-- conic -->
    <path d="M14 245.3 C15.5 233.5 26.5 233.5 28 245.3" fill="none" stroke="#666" stroke-width="1"/>
    <g fill="#1e88e5"><rect x="12.6" y="244" width="2.4" height="2.4"/><rect x="26.8" y="244" width="2.4" height="2.4"/><rect x="20" y="230.4" width="2.4" height="2.4"/></g>
    <!-- point -->
    <path d="M20.7 251 V256 M20.7 261.5 V266 M13 258.6 H18 M23.5 258.6 H28" stroke="#555" stroke-width="1"/>
    <rect x="19.2" y="257.1" width="3" height="3" fill="#444"/>
    <!-- text A -->
    <path d="M14 286 L19 272 H21 L26 286 M16 282 H24" fill="none" stroke="#666" stroke-width="2.6"/>
    <!-- mirror -->
    <path d="M13 306 L19.2 294 V306 Z" fill="none" stroke="#666" stroke-width="1"/>
    <path d="M21.3 294 V306 H27.5 Z" fill="none" stroke="#1e88e5" stroke-width="1"/>
    <!-- circular pattern -->
    <g fill="none" stroke="#1e88e5" stroke-width="1"><circle cx="20" cy="313.5" r="1.6"/><circle cx="25.5" cy="316.5" r="1.6"/><circle cx="25.5" cy="322" r="1.6"/><circle cx="20" cy="325.5" r="1.6"/><circle cx="14.5" cy="322" r="1.6"/></g>
    <circle cx="14.5" cy="316.5" r="1.6" fill="none" stroke="#777" stroke-width="1"/>
    <!-- rect pattern -->
    <g fill="none" stroke-width="1"><rect x="13.5" y="333.5" width="3" height="3" stroke="#666"/><rect x="23.5" y="333.5" width="3" height="3" stroke="#1e88e5"/><rect x="13.5" y="342.5" width="3" height="3" stroke="#1e88e5"/><rect x="23.5" y="342.5" width="3" height="3" stroke="#1e88e5"/>
    <path d="M18 335 h4 M15 338 v3 M18 344 h4" stroke="#666"/></g>
    <!-- dimension -->
    <path d="M13.5 375.2 V388.5 M28.4 375.2 V388.5" stroke="#555" stroke-width="1"/>
    <path d="M14.5 379.4 H27.4" stroke="#1e88e5" stroke-width="1.2"/>
    <path d="M14.3 379.4 L16.3 377.4 V381.4 Z M27.6 379.4 L25.6 377.4 V381.4 Z" fill="#1e88e5"/>
  </svg>
</div>

<!-- submenu -->
<div id="sub">
  <div class="si" style="top:6.5px">Project</div><div class="sc" style="left:128px;top:6.5px">P</div>
  <div class="si" style="top:26.5px">Intersect</div>
  <div class="abs" style="left:4px;top:42px;width:156px;height:1px;background:#8a8a8a"></div>
  <div class="si" style="top:47.5px">Include 3D Geometry</div>
  <div class="abs" style="left:4px;top:63px;width:156px;height:1px;background:#8a8a8a"></div>
  <div class="si" style="top:68.5px">Project To Surface</div>
  <div class="si" style="top:88.5px">Intersection Curve</div>
  <svg class="abs" style="left:0;top:0" width="24" height="106" viewBox="159 349 24 106">
    <!-- project -->
    <path d="M164.1 359.6 L166.9 353.5 H179.8 L177.1 359.6 Z" fill="#fff" stroke="#555" stroke-width="0.9"/>
    <path d="M167.5 357.8 L169.3 354.8 H176.6 L174.6 357.8 Z" fill="#3d8fe0"/>
    <path d="M169 362.5 H176.4 V366.5 L174.5 368.5 H169 Z" fill="#fff" stroke="#555" stroke-width="0.9"/>
    <path d="M169.6 361.8 L171 360.6 H176.6 L175.2 361.8 Z" fill="#3d8fe0"/>
    <!-- intersect -->
    <path d="M164.1 380.7 L166.9 375.3 H179.8 L177.1 380.7 Z" fill="#fff" stroke="#555" stroke-width="0.9"/>
    <path d="M170 379.5 L171.3 376.6 H176 L174.8 379.5 Z" fill="#3d8fe0"/>
    <path d="M171.8 378.5 L172.4 377.4 H174.2 L173.7 378.5 Z" fill="#fff"/>
    <path d="M168.2 380.7 V386.2 H175.2 L176.6 384.3 V380.7" fill="#fff" stroke="#555" stroke-width="0.9"/>
    <!-- include 3d -->
    <path d="M165.1 397.8 H176.4 V407.6 H165.1 Z" fill="#dcdcdc" stroke="#666" stroke-width="0.9"/>
    <path d="M165.1 397.8 L167.5 394.4 H178.7 L176.4 397.8 Z" fill="#4a9ee0"/>
    <path d="M176.4 397.8 L178.7 394.4 V404.5 L176.4 407.6 Z" fill="#b8b8b8"/>
    <path d="M174.4 404.4 L175 406.7 L177.3 407.3 L175 407.9 L174.4 410.2 L173.8 407.9 L171.5 407.3 L173.8 406.7 Z" fill="#f07010" stroke="#f07010" stroke-width="0.4"/>
    <circle cx="174.4" cy="407.3" r="0.8" fill="#fff"/>
    <!-- project to surface -->
    <path d="M167.5 417.8 V415 H175.8" fill="none" stroke="#555" stroke-width="0.9"/>
    <path d="M164.2 423.5 C168 419.8 176 419.8 179.8 423.5 V430.5 C176 427.5 168 427.5 164.2 430.5 Z" fill="#fff" stroke="#555" stroke-width="0.9"/>
    <path d="M166.8 425.6 V424.8 C170 422.8 174 422.8 177 424.8" fill="none" stroke="#3d8fe0" stroke-width="1.1"/>
    <!-- intersection curve -->
    <path d="M164.1 435.3 H172.3 V446.2 H164.1 Z" fill="#e2955e"/>
    <path d="M172.3 438 L179.8 431.2 V442.1 L172.3 449.6 Z" fill="#e2955e"/>
    <path d="M176.4 433 V445.5" stroke="#2f86d8" stroke-width="1.1"/>
  </svg>
</div>

<!-- right panel edge -->
<div class="abs" style="left:1144px;top:195px;width:10px;height:423px;background:#f1f1f1;border-left:1px solid #c8c8c8"></div>
<div class="abs" style="left:1145px;top:580.5px;width:3px;height:1px;background:#c8c8c8"></div>
<div class="abs" style="left:1146px;top:204px;width:1px;height:8px;background:#555"></div>

<!-- INTERSECT dialog -->
<div id="dlg">
  <div class="abs" style="left:1px;top:7px;width:1px;height:9px;background:#999"></div>
  <div class="abs" style="left:3px;top:5px;width:1px;height:13px;background:#333"></div>
  <div class="abs" style="left:11px;top:7.5px;width:9px;height:9px;border-radius:50%;background:#2b2b2b"></div>
  <div class="abs" style="left:13px;top:11.3px;width:5px;height:1.5px;background:#f1f1f1"></div>
  <div class="abs" style="left:24px;top:5.5px;font-size:10px;color:#555;white-space:nowrap;transform:scaleX(0.92);transform-origin:0 0">INTERSECT</div>
  <svg class="abs" style="left:234px;top:9px" width="12" height="8"><path d="M0.5 0.5 L5 3.5 L0.5 6.5 Z M5.5 0.5 L10 3.5 L5.5 6.5 Z" fill="#222"/></svg>
  <div class="abs" style="left:0;top:24px;width:247px;height:1px;background:#c8c8c8"></div>
  <div class="dl" style="top:33px">Geometry</div>
  <div class="abs" style="left:95.5px;top:25.3px;width:78.5px;height:27px;background:#0696d7;border-radius:2px"></div>
  <svg class="abs" style="left:102px;top:32.5px" width="12" height="16"><path d="M1 1 L1 12 L3.5 9.5 L6 14 L8 13 L5.8 8.8 L9.5 8.5 Z" fill="#e8e8e8" stroke="#6a6a6a" stroke-width="1"/></svg>
  <div class="abs" style="left:117px;top:33.5px;font-size:11px;color:#fff;white-space:nowrap">2 selected</div>
  <svg class="abs" style="left:184px;top:35px" width="10" height="10"><path d="M1 1 L9 9 M9 1 L1 9" stroke="#555" stroke-width="1.8"/></svg>
  <div class="dl" style="top:63px">Selection Filter</div>
  <div class="abs" style="left:95.5px;top:55.5px;width:23.5px;height:27px;background:#0696d7;border-radius:2px"></div>
  <svg class="abs" style="left:100px;top:62px" width="16" height="16"><rect x="2" y="2" width="10" height="8" fill="#c9a6f0" stroke="#7a3fb0" stroke-width="0.8"/><g fill="#fff" stroke="#7a3fb0" stroke-width="0.6"><circle cx="2" cy="2" r="1"/><circle cx="12" cy="2" r="1"/><circle cx="2" cy="10" r="1"/><circle cx="12" cy="10" r="1"/></g><path d="M8 5 V14 L10 12 L12 15 L13 14.5 L11.5 11.5 L14 11 Z" fill="#fff" stroke="#111" stroke-width="0.8"/></svg>
  <svg class="abs" style="left:128px;top:61px" width="18" height="18"><defs><linearGradient id="cyl" x1="0" y1="0" x2="1" y2="0"><stop offset="0" stop-color="#f4f4f4"/><stop offset="0.35" stop-color="#b8bcc4"/><stop offset="1" stop-color="#f8f8f8"/></linearGradient></defs><path d="M1.5 4.5 C1.5 0.5 15.5 0.5 15.5 4.5 V12.5 C15.5 16.5 1.5 16.5 1.5 12.5 Z" fill="url(#cyl)" stroke="#3a3a3a" stroke-width="1.1"/><path d="M2 4.5 C2 7.5 15 7.5 15 4.5 C15 2 2 2 2 4.5 Z" fill="#fafafa"/></svg>
  <div class="dl" style="top:93px">Projection Link</div>
  <div class="abs" style="left:100.8px;top:92.5px;width:13.5px;height:13px;background:linear-gradient(#c4c4c4,#ececec);border:1px solid #555;border-radius:2.5px;box-sizing:border-box"></div>
  <svg class="abs" style="left:102.3px;top:93.5px" width="10" height="10"><path d="M1.5 5 L4 8.5 L8.5 1" fill="none" stroke="#111" stroke-width="1.2"/></svg>
  <div class="abs" style="left:0;top:116px;width:247px;height:1px;background:#c8c8c8"></div>
  <div class="abs" style="left:7.5px;top:127.5px;width:13px;height:13px;border-radius:50%;background:#111;color:#fff;font-size:10px;font-weight:bold;text-align:center;line-height:13px;font-family:'Liberation Serif',serif">i</div>
  <div class="btn" style="left:107px">OK</div>
  <div class="btn" style="left:177px">Cancel</div>
</div>

</body></html>
